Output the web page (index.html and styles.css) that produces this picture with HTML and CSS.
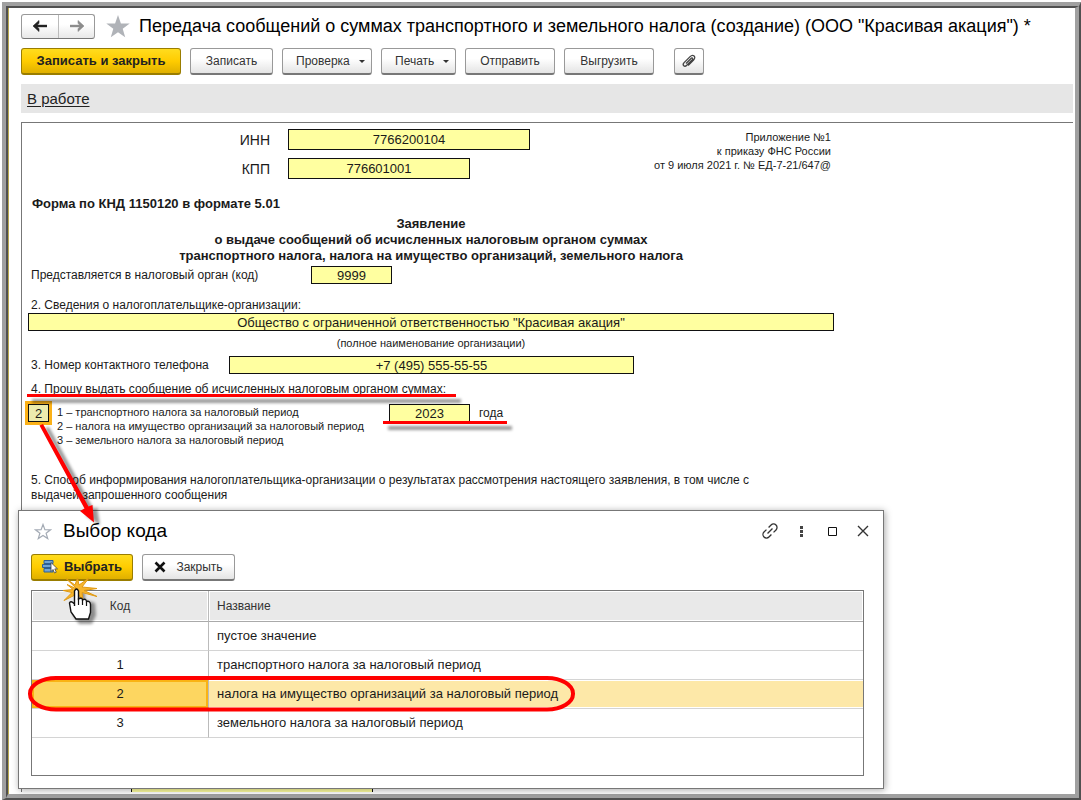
FILE: index.html
```html
<!DOCTYPE html>
<html lang="ru">
<head>
<meta charset="utf-8">
<title>Передача сообщений о суммах налога</title>
<link rel="stylesheet" href="styles.css">
</head>
<body>
<div class="frame">
<div class="window">
  <header class="titlebar">
    <div class="nav">
      <button class="nav-btn" type="button" aria-label="Назад"><svg width="16" height="12" viewBox="0 0 16 12"><path d="M15 6H4" stroke="#222" stroke-width="2.400"/><path d="M1 6l6-5.500v2.700L4.500 6 7 8.800v2.700z" fill="#222" stroke="#222" stroke-width=".6"/></svg></button>
      <button class="nav-btn" type="button" aria-label="Вперёд"><svg width="16" height="12" viewBox="0 0 16 12"><path d="M1 6h11" stroke="#8c8c8c" stroke-width="2.400"/><path d="M15 6L9 .5v2.700L11.500 6 9 8.800v2.700z" fill="#8c8c8c" stroke="#8c8c8c" stroke-width=".6"/></svg></button>
    </div>
    <svg class="star" width="24" height="23" viewBox="0 0 24 23"><path d="M12 0l2.900 8.400 8.800.1-7 5.300 2.500 8.500L12 17.200l-7.200 5.100 2.500-8.500-7-5.300 8.800-.1z" fill="#b0b3b8"/></svg>
    <h1 class="title">Передача сообщений о суммах транспортного и земельного налога (создание) (ООО "Красивая акация") *</h1>
  </header>
  <div class="toolbar">
    <button class="btn primary save" type="button">Записать и закрыть</button>
    <button class="btn write" type="button">Записать</button>
    <button class="btn drop wide" type="button">Проверка<span class="caret"></span></button>
    <button class="btn drop print" type="button">Печать<span class="caret"></span></button>
    <button class="btn wide" type="button">Отправить</button>
    <button class="btn wide" type="button">Выгрузить</button>
    <button class="btn clip" type="button" aria-label="Вложения"><svg width="16" height="16" viewBox="0 0 16 16"><path d="M5 10.500l5-5c1.300-1.300 2.500 0 1.300 1.300l-5.500 5.500c-2.300 2.300-5-.3-2.700-2.700l6-6c3-3 6.500.4 3.500 3.400l-5.500 5.500" fill="none" stroke="#444" stroke-width="1.300"/></svg></button>
  </div>
  <div class="status"><a class="status-link" href="#">В работе</a></div>
  <main class="form">
    <div class="top">
      <div class="ids">
        <label class="id-label" for="inn">ИНН</label><input class="field inn" id="inn" value="7766200104">
        <label class="id-label" for="kpp">КПП</label><input class="field kpp" id="kpp" value="776601001">
      </div>
      <p class="appendix">Приложение №1<br>к приказу ФНС России<br>от 9 июля 2021 г. № ЕД-7-21/647@</p>
    </div>
    <p class="knd">Форма по КНД 1150120 в формате 5.01</p>
    <h2 class="heading">Заявление<br>о выдаче сообщений об исчисленных налоговым органом суммах<br>транспортного налога, налога на имущество организаций, земельного налога</h2>
    <div class="line"><label class="office-label" for="office">Представляется в налоговый орган (код)</label><input class="field code" id="office" value="9999"></div>
    <label class="text org-label" for="org">2. Сведения о налогоплательщике-организации:</label>
    <input class="field org" id="org" value="Общество с ограниченной ответственностью &quot;Красивая акация&quot;">
    <p class="caption">(полное наименование организации)</p>
    <div class="line"><label class="phone-label" for="phone">3. Номер контактного телефона</label><input class="field phone" id="phone" value="+7 (495) 555-55-55"></div>
    <p class="text request">4. Прошу выдать сообщение об исчисленных налоговым органом суммах:</p>
    <div class="choice">
      <input class="field kind" aria-label="Код налога" value="2">
      <p class="kinds">1 – транспортного налога за налоговый период<br>2 – налога на имущество организаций за налоговый период<br>3 – земельного налога за налоговый период</p>
      <div class="year"><input class="field code" id="year" value="2023"><label for="year">года</label></div>
    </div>
    <p class="text inform">5. Способ информирования налогоплательщика-организации о результатах рассмотрения настоящего заявления, в том числе с выдачей запрошенного сообщения</p>
    <input class="field extra" aria-label="Способ информирования">
  </main>
</div>
</div>

<section class="dialog" role="dialog" aria-labelledby="dialog-title">
  <header class="dialog-head">
    <svg width="18" height="17" viewBox="0 0 18 17"><path d="M9 1.500l1.900 5.200 5.600.1-4.400 3.400 1.600 5.300L9 12.400l-4.700 3.100 1.600-5.300L1.500 6.800l5.600-.1z" fill="#fff" stroke="#a4abb5" stroke-width="1.200"/></svg>
    <h2 class="dialog-title" id="dialog-title">Выбор кода</h2>
    <button class="tool" type="button" aria-label="Ссылка"><svg width="18" height="18" viewBox="0 0 18 18"><g transform="rotate(-45 9 9)" fill="none" stroke="#333" stroke-width="1.300"><path d="M7.500 5.500H4a3.500 3.500 0 0 0 0 7h3.500M10.500 5.500H14a3.500 3.500 0 0 1 0 7h-3.500M5.500 9h7"/></g></svg></button>
    <button class="tool" type="button" aria-label="Ещё"><svg width="18" height="18" viewBox="0 0 18 18"><path d="M8 4h3v3H8zM8 8h3v3H8zM8 12h3v3H8z" fill="#444"/></svg></button>
    <button class="tool" type="button" aria-label="Развернуть"><svg width="18" height="18" viewBox="0 0 18 18"><path d="M5.500 5.500h8v8h-8z" fill="none" stroke="#111"/></svg></button>
    <button class="tool" type="button" aria-label="Закрыть окно"><svg width="18" height="18" viewBox="0 0 18 18"><path d="M4 4l10 10M14 4L4 14" stroke="#333" stroke-width="1.400"/></svg></button>
  </header>
  <div class="dialog-actions">
    <button class="btn primary pick" type="button"><svg width="16" height="14" viewBox="0 0 16 14"><path d="M2 .5h9v3H2zM.5 4.500h10v3H.5zM2 8.500h9v3.500H2z" fill="#6fa4d6" stroke="#2d5f94"/><path d="M9 2.500v9l2-2 1.500 3.500 1.800-.8-1.500-3.300h2.700z" fill="#fff" stroke="#444" stroke-width=".8"/></svg>Выбрать</button>
    <button class="btn close" type="button"><svg width="12" height="12" viewBox="0 0 12 12"><path d="M1.500 1.500l9 9M10.500 1.500l-9 9" stroke="#111" stroke-width="2.600"/></svg>Закрыть</button>
  </div>
  <div class="grid">
    <table class="codes">
      <thead><tr><th class="num">Код</th><th>Название</th></tr></thead>
      <tbody>
        <tr><td class="num"></td><td>пустое значение</td></tr>
        <tr><td class="num">1</td><td>транспортного налога за налоговый период</td></tr>
        <tr class="selected"><td class="num">2</td><td>налога на имущество организаций за налоговый период</td></tr>
        <tr><td class="num">3</td><td>земельного налога за налоговый период</td></tr>
      </tbody>
    </table>
  </div>
</section>

<svg class="marks" width="620" height="720" viewBox="0 0 620 720" aria-hidden="true">
  <defs><filter id="shade" x="-20%" y="-20%" width="150%" height="150%"><feGaussianBlur stdDeviation="1.800"/></filter></defs>
  <g fill="#000" opacity=".4" filter="url(#shade)">
    <path d="M32 399h429v4H32zM388 426h124v4H388z"/>
    <path d="M45 428l4-1 45 83 3-3 3 18-15-10 5-1z"/>
    <path d="M79 592h6v8l10 3 1 12-4 9H79l-6-9z"/>
  </g>
  <path d="M27 394h429v3H27zM383 421h124v3H383z" fill="#f00"/>
  <path d="M39.500 425.500l3.500-1.500 45.500 82.500 4-1.500 1.500 17.500L80 511l4.500-2.500z" fill="#f00"/>
  <rect x="30" y="678" width="543" height="31.500" rx="26" ry="15.500" fill="none" stroke="#f00" stroke-width="4"/>
  <path d="M77 589L66 578.500l9 6.500 2.500-7 1.500 7 10-7-7 9 15 1.500-13 2 13 6-15-4 1 9-5-8-4 2-10 5 8-8-9-2 10-1-6-5z" fill="#f7b52c" stroke="#e09a14"/>
  <path d="M74.500 606v-15q2-4 4 0v8q3.500-2 4 1 3.500-2 4 1.500 3.500-1 4 3v8l-2 6.500H76l-5-7-1.500-9q1-3 5 1z" fill="#fff" stroke="#111" stroke-width="1.400"/>
  <path d="M78.500 598v7M82.500 600v5M86.500 602v4" stroke="#111" stroke-width="1.200"/>
</svg>
</body>
</html>
```
FILE: styles.css
```css
* { box-sizing: border-box; }
body {
  margin: 0;
  padding: 2px 0 0 2px;
  height: 100vh;
  overflow: hidden;
  position: relative;
  background: #fff;
  color: #1a1a1a;
  font: 12px/16px "Liberation Sans", Arial, sans-serif;
}
h1, h2, p { margin: 0; }
input, button { font: inherit; color: inherit; }
.frame {
  height: 100%;
  border: solid #a0a0a0;
  border-width: 4px 2px 2px 4px;
  border-right-color: #505050;
  border-bottom-color: #505050;
}
.window {
  height: 100%;
  display: flex;
  flex-direction: column;
  border: solid #505050;
  border-width: 2px 4px 4px 2px;
  border-right-color: #a0a0a0;
  border-bottom-color: #a0a0a0;
  padding: 0 2px 2px 13px;
  background: linear-gradient(to right, #b8a850 1px, #fff 1px);
}
.titlebar { display: flex; align-items: center; height: 36px; }
.nav { display: flex; height: 25px; border: 1px solid #999; border-bottom-color: #777; border-radius: 3px; background: linear-gradient(#fff 40%, #e8e8e8); }
.nav-btn { width: 36px; padding: 0; border: 0; background: none; display: flex; align-items: center; justify-content: center; }
.nav-btn + .nav-btn { border-left: 1px solid #bbb; }
.star { margin: 0 9px 0 11px; flex: none; }
.title { font-size: 18px; line-height: 24px; font-weight: normal; color: #000; white-space: nowrap; }
.toolbar { display: flex; gap: 9px; margin-top: 4px; }
.btn {
  height: 27px;
  padding: 0;
  border: 1px solid #999;
  border-bottom: 2px solid #777;
  border-radius: 3px;
  background: linear-gradient(#fff 40%, #e4e4e4);
  color: #333;
  display: flex;
  align-items: center;
  justify-content: center;
  white-space: nowrap;
}
.primary { background: linear-gradient(#ffdc1e, #fc0 50%, #e0b000); border-color: #9a7d00; font-weight: bold; font-size: 13px; color: #222; }
.save { width: 160px; }
.write { width: 83px; }
.print { width: 75px; }
.wide { width: 90px; }
.drop { justify-content: space-between; padding: 0 6px 0 13px; }
.caret { border: 3px solid transparent; border-top-color: #333; border-bottom: 0; }
.clip { width: 30px; margin-left: 11px; }
.status { height: 29px; margin-top: 9px; padding: 5px 6px; background: #e6e6e6; }
.status-link { font-size: 15px; line-height: 20px; color: #222; text-underline-offset: 2px; }
.form {
  flex: 1;
  min-height: 0;
  overflow: hidden;
  margin-top: 9px;
  padding: 6px 6px 0;
  border: solid #777;
  border-width: 1px 0 0 1px;
}
.top { width: 803px; display: flex; justify-content: space-between; }
.ids { display: grid; grid-template-columns: 242px 242px; column-gap: 18px; row-gap: 8px; align-items: center; }
.id-label { text-align: right; font-size: 14px; }
.field { display: block; height: 18px; padding: 0; border: 1px solid #111; border-radius: 0; background: #ffffa0; text-align: center; font-size: 13px; }
.inn, .kpp { height: 21px; }
.kpp { width: 182px; }
.appendix { font-size: 11px; line-height: 14px; padding-top: 1px; text-align: right; }
.knd { margin: 17px 0 0 4px; font-size: 13px; font-weight: bold; }
.heading { width: 806px; margin-top: 4px; font-size: 13px; line-height: 16px; text-align: center; }
.line { display: flex; align-items: center; padding-left: 3px; }
.heading + .line { margin-top: 2px; }
.office-label { width: 280px; }
.code { width: 81px; }
.text { padding-left: 3px; }
.org-label { display: block; margin-top: 13px; }
.org { width: 806px; }
.caption { width: 806px; margin: 4px 0 5px; font-size: 11px; text-align: center; }
.phone-label { width: 198px; }
.phone { width: 405px; }
.request { margin-top: 7px; }
.choice { display: flex; align-items: flex-start; margin-top: 7px; }
.kind { width: 21px; background: #ecebad; outline: 3px solid #fbb117; }
.kinds { width: 332px; margin-left: 8px; padding-top: 1px; font-size: 11px; line-height: 14px; white-space: nowrap; }
.year { display: flex; gap: 9px; align-items: center; }
.inform { width: 750px; margin-top: 26px; line-height: 15px; }
.extra { width: 242px; margin: 278px 0 0 103px; }

.dialog {
  position: absolute;
  left: 18px;
  top: 510px;
  width: 866px;
  border: 1px solid #777;
  background: #fff;
  box-shadow: 1px 1px 7px rgba(0, 0, 0, .35);
  padding: 8px 19px 12px 12px;
}
.dialog-head { display: flex; align-items: center; gap: 13px; padding-left: 3px; height: 24px; }
.dialog-head .dialog-title { flex: 1; margin-left: -2px; font-size: 19px; line-height: 24px; font-weight: normal; color: #000; }
.tool { width: 18px; height: 18px; padding: 0; border: 0; background: none; display: flex; }
.tool:last-child { margin-right: -8px; }
.dialog-actions { display: flex; gap: 9px; margin-top: 11px; }
.pick { width: 102px; gap: 6px; }
.close { width: 93px; gap: 10px; }
.grid { height: 186px; margin-top: 9px; border: 1px solid #777; }
.codes { width: 100%; border-spacing: 0; table-layout: fixed; font-size: 13px; }
.codes th, .codes td { height: 29px; padding: 0 8px; border-bottom: 1px solid #d4d4d4; text-align: left; font-weight: normal; }
.codes th { height: 31px; background: #e9e9e9; border-bottom-color: #aaa; color: #333; box-shadow: inset 0 0 0 1px #fff; font-size: 12px; }
.codes .num { width: 177px; border-right: 1px solid #bbb; text-align: center; }
.codes .selected td { background: #fde8a8; box-shadow: inset 0 1px #fff, inset 0 -1px #fff; }
.codes .selected .num { background: #fdd660; box-shadow: inset 0 0 0 2px #f9b314; }
.marks { position: absolute; left: 0; top: 0; pointer-events: none; }
```
